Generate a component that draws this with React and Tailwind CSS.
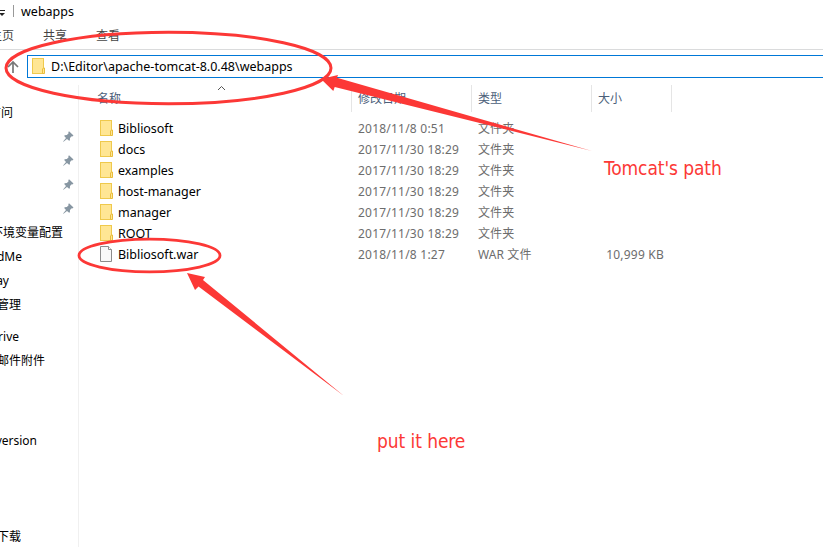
const files = [
  { name: 'Bibliosoft', date: '2018/11/8 0:51', type: '文件夹' },
  { name: 'docs', date: '2017/11/30 18:29', type: '文件夹' },
  { name: 'examples', date: '2017/11/30 18:29', type: '文件夹' },
  { name: 'host-manager', date: '2017/11/30 18:29', type: '文件夹' },
  { name: 'manager', date: '2017/11/30 18:29', type: '文件夹' },
  { name: 'ROOT', date: '2017/11/30 18:29', type: '文件夹' },
  { name: 'Bibliosoft.war', date: '2018/11/8 1:27', type: 'WAR 文件', size: '10,999 KB', file: true },
];

// Labels are right-anchored: the navigation pane is scrolled past its left edge.
const sidebar = [
  { label: '访问', box: 'w-[13px] h-6' },
  { pin: true },
  { pin: true },
  { pin: true },
  { pin: true },
  { label: '环境变量配置', box: 'w-[63px] h-6' },
  { label: 'dMe', box: 'w-[22px] h-6' },
  { label: 'ay', box: 'w-[9px] h-6' },
  { label: '管理', box: 'w-[21px] h-6' },
  { label: 'rive', box: 'w-[19px] h-6 mt-2' },
  { label: '邮件附件', box: 'w-[45px] h-6' },
  { label: 'version', box: 'w-[37px] h-6 mt-14' },
  { label: '下载', box: 'w-[21px] h-6 mt-[72px]' },
];

function Folder() {
  return (
    <svg className="h-4 w-[14px] shrink-0" viewBox="0 0 14 16">
      <rect x="0.5" y="0.5" width="11" height="15" fill="#ffe694" stroke="#efc94c" />
      <path d="M10.500 15.500v-4.500l1-1h1v5.500z" fill="#ffe694" stroke="#e9bd3c" />
    </svg>
  );
}

function Document() {
  return (
    <svg className="h-4 w-[14px] shrink-0" viewBox="0 0 14 16">
      <path d="M0.500 0.500h8l3 3v12h-11z" fill="#f8f8f8" stroke="#8c8c8c" />
      <path d="M8.500 0.500v3h3" fill="#fff" stroke="#8c8c8c" />
    </svg>
  );
}

function Pin() {
  return (
    <svg className="h-[11px] w-[11px]" viewBox="0 0 11 11">
      <path d="M6 0.300L10.500 4.600L9.300 5.400L8.700 5.200L7 7L6.900 9.200L6.100 9.800L4 7.900L0.500 10.800L0.100 10.400L3 7L1.200 5.100L1.700 4.200L3.900 4.100L5.600 2.300L5.300 1.200Z" fill="#8796a2" />
    </svg>
  );
}

function Annotations() {
  return (
    <svg className="pointer-events-none absolute inset-0 h-[547px] w-[823px]" viewBox="0 0 823 547" fill="none">
      <ellipse cx="168.500" cy="68" rx="162.500" ry="35.700" stroke="#fc3836" strokeWidth="3" />
      <ellipse cx="149.500" cy="255.500" rx="70.500" ry="16.300" stroke="#fc3836" strokeWidth="2.8" />
      <path d="M321 79L338 75L337 77.800L592 151L334.700 87L333.300 91Z" fill="#fc3836" />
      <path d="M187 273L205 277L203 280L344 396L198.500 286.500L195 290Z" fill="#fc3836" />
    </svg>
  );
}

export default function App() {
  return (
    <div className="relative flex h-[547px] w-[823px] flex-col overflow-hidden bg-white font-['Noto_Sans','Noto_Sans_CJK_SC',sans-serif] text-[12.5px] leading-none whitespace-nowrap text-black">
      <header className="flex h-6 shrink-0 items-center">
        <svg className="h-6 w-[21px]" viewBox="0 0 21 24">
          <path d="M0 10.500H5" stroke="#222" />
          <path d="M-1 13H5L2 16Z" fill="#222" />
          <path d="M13.500 5V17" stroke="#999" />
        </svg>
        <span className="pt-px text-[12.5px]">webapps</span>
      </header>
      <nav className="flex h-[26px] shrink-0 border-b border-[#dadbdc] text-[12px] leading-[23px] text-[#444]">
        <div className="flex w-[14px] justify-end overflow-hidden">主页</div>
        <div className="ml-[29px] w-[53px]">共享</div>
        <div>查看</div>
      </nav>
      <div className="flex h-[28px] shrink-0 pt-[5px]">
        <svg className="h-[23px] w-[27px]" viewBox="0 0 27 23" fill="none" stroke="#777" strokeWidth="1.7">
          <path d="M13 18V7M8 12L13 7L18 12" />
        </svg>
        <div className="flex h-[23px] flex-1 items-center border-y border-l border-[#0078d7] pb-px pl-1">
          <Folder />
          <span className="ml-[5px] pt-[3px] text-[12.5px]">D:\Editor\apache-tomcat-8.0.48\webapps</span>
        </div>
      </div>
      <div className="flex flex-1 pt-[7px]">
        <aside className="flex h-[462px] w-[79px] shrink-0 flex-col border-r border-[#f0f0f0] pt-[15px]">
          {sidebar.map((item, i) =>
            item.pin ? (
              <div key={i} className="flex h-6 shrink-0 items-center pt-px pl-[63px]">
                <Pin />
              </div>
            ) : (
              <div key={i} className={`flex shrink-0 items-center justify-end overflow-hidden pt-[2px] text-[12px] ${item.box}`}>
                {item.label}
              </div>
            ),
          )}
        </aside>
        <main className="flex-1">
          <div className="flex h-[27px] text-[12px] leading-[27px] text-[#4c607a]">
            <div className="flex w-[273px] border-r border-[#e5e5e5] pl-[18px]">
              <span className="w-[120px]">名称</span>
              <svg className="h-[7px] w-[9px]" viewBox="0 0 9 7" fill="none" stroke="#555">
                <path d="M1 5L4.500 1.500L8 5" />
              </svg>
            </div>
            <div className="w-[120px] border-r border-[#e5e5e5] pl-[6px]">修改日期</div>
            <div className="w-[120px] border-r border-[#e5e5e5] pl-[6px]">类型</div>
            <div className="w-[80px] border-r border-[#e5e5e5] pl-[6px]">大小</div>
          </div>
          <div className="pt-[5px]">
            {files.map((f) => (
              <div key={f.name} className="flex h-[21px] items-center pl-[21px] text-[#6d6d6d]">
                {f.file ? <Document /> : <Folder />}
                <span className="ml-1 w-[240px] pt-[3px] text-[12.5px] tracking-[-0.03px] text-black">{f.name}</span>
                <span className="w-[120px] pt-[2px] text-[12px] tracking-[0.22px]">{f.date}</span>
                <span className="w-[120px] pt-[2px] text-[12px] tracking-[0.1px]">{f.type}</span>
                <span className="w-[66px] pt-[2px] text-right text-[12px] tracking-[0.22px]">{f.size}</span>
              </div>
            ))}
          </div>
        </main>
      </div>
      <Annotations />
      <div className="absolute top-[156px] left-[604px] font-['DejaVu_Sans_Condensed','DejaVu_Sans',sans-serif] text-[19px] leading-6 tracking-[-0.08px] text-[#fc3836]">Tomcat's path</div>
      <div className="absolute top-[429px] left-[377px] font-['DejaVu_Sans_Condensed','DejaVu_Sans',sans-serif] text-[19px] leading-6 tracking-[-0.08px] text-[#fc3836]">put it here</div>
    </div>
  );
}
